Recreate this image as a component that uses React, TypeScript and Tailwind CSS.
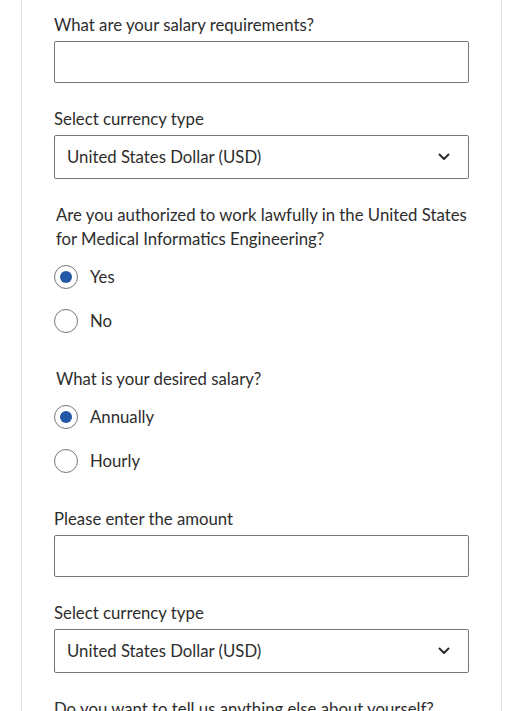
import { useState } from "react";

const FONT = { fontFamily: "Lato, 'Noto Sans', sans-serif" };

function Chevron() {
  return (
    <svg width="12" height="8" viewBox="0 0 12 8" fill="none" stroke="#2d2d2d" strokeWidth="2" strokeLinecap="round" strokeLinejoin="round">
      <path d="M1.5 1.5l4.5 4.5 4.5-4.5" />
    </svg>
  );
}

function TextField({ label }: { label: string }) {
  return (
    <div className="flex flex-col">
      <label className="text-[16.75px] leading-6 text-[#2d2d2d]">{label}</label>
      <input
        type="text"
        className="mt-1 h-[42px] w-full rounded-[2px] border border-[#767676] bg-white px-3 text-[16.75px] text-[#2d2d2d] outline-none"
      />
    </div>
  );
}

function CurrencySelect() {
  return (
    <div className="flex flex-col">
      <label className="text-[16.75px] leading-6 text-[#2d2d2d]">Select currency type</label>
      <div className="mt-1 flex h-[44px] w-full items-center justify-between rounded-[2px] border border-[#767676] bg-white pl-3 pr-[18px]">
        <span className="text-[16.75px] text-[#2d2d2d]">United States Dollar (USD)</span>
        <Chevron />
      </div>
    </div>
  );
}

function RadioGroup({ question, options }: { question: string; options: string[] }) {
  const [value, setValue] = useState(options[0]);
  return (
    <fieldset className="flex flex-col">
      <legend className="pl-0.5 text-[16.75px] leading-6 text-[#2d2d2d]">{question}</legend>
      <div className="mt-1 flex flex-col">
        {options.map((o) => (
          <label key={o} className="flex h-11 cursor-pointer items-center gap-3" onClick={() => setValue(o)}>
            <span className="flex h-6 w-6 items-center justify-center rounded-full border border-[#767676] bg-white">
              {value === o && <span className="h-[12px] w-[12px] rounded-full bg-[#2557a7]" />}
            </span>
            <span className="text-[16.75px] text-[#2d2d2d]">{o}</span>
          </label>
        ))}
      </div>
    </fieldset>
  );
}

export default function App() {
  return (
    <div className="min-h-screen bg-white" style={FONT}>
      <div className="ml-[21px] min-h-screen w-[481px] border-x border-[#e4e2e0] px-8 pt-[13px] pb-10">
        <div className="flex flex-col gap-6">
          <TextField label="What are your salary requirements?" />
          <CurrencySelect />
          <RadioGroup
            question="Are you authorized to work lawfully in the United States for Medical Informatics Engineering?"
            options={["Yes", "No"]}
          />
          <RadioGroup question="What is your desired salary?" options={["Annually", "Hourly"]} />
          <TextField label="Please enter the amount" />
          <CurrencySelect />
          <div className="flex flex-col">
            <label className="text-[16.75px] leading-6 text-[#2d2d2d]">Do you want to tell us anything else about yourself?</label>
            <textarea className="mt-1 h-32 w-full rounded-[2px] border border-[#767676] bg-white p-3 text-[16.75px] outline-none" />
          </div>
        </div>
      </div>
    </div>
  );
}
